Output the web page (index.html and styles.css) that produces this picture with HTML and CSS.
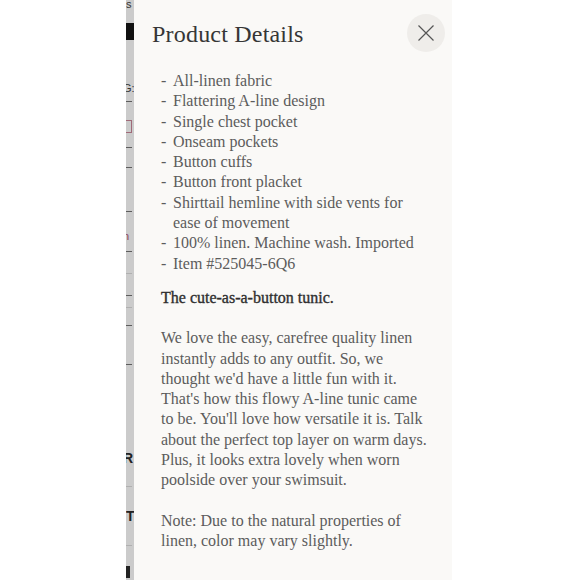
FILE: index.html
```html
<!DOCTYPE html>
<html lang="en">
<head>
<meta charset="utf-8">
<title>Product Details</title>
<link rel="stylesheet" href="styles.css">
</head>
<body>
<div class="page">
  <div class="left"></div>
  <div class="strip" aria-hidden="true">
    <span class="frag">s</span>
    <i class="blk"></i>
    <span class="frag cut">G:</span>
    <i class="ln"></i>
    <i class="sq"></i>
    <i class="ln"></i>
    <i class="ln"></i>
    <i class="ln"></i>
    <span class="frag cut red">n</span>
    <i class="ln"></i>
    <i class="ln faint"></i>
    <i class="ln"></i>
    <i class="ln faint"></i>
    <i class="ln"></i>
    <i class="ln"></i>
    <span class="frag cut big">R</span>
    <i class="ln faint"></i>
    <span class="frag big">T</span>
    <i class="ln faint"></i>
    <i class="blk small"></i>
  </div>
  <aside class="panel">
    <header class="head">
      <h1 class="title">Product Details</h1>
      <button class="close" type="button" aria-label="Close">
        <svg width="18" height="18" viewBox="0 0 18 18"><path d="M1.5 1.5 L16.5 16.5 M16.5 1.5 L1.5 16.5" stroke="#555" stroke-width="1.2" fill="none"/></svg>
      </button>
    </header>
    <div class="body">
      <ul class="feats">
        <li>All-linen fabric</li>
        <li>Flattering A-line design</li>
        <li>Single chest pocket</li>
        <li>Onseam pockets</li>
        <li>Button cuffs</li>
        <li>Button front placket</li>
        <li>Shirttail hemline with side vents for<br>ease of movement</li>
        <li>100% linen. Machine wash. Imported</li>
        <li>Item #525045-6Q6</li>
      </ul>
      <p class="lead">The cute-as-a-button tunic.</p>
      <p class="txt">We love the easy, carefree quality linen<br>instantly adds to any outfit. So, we<br>thought we'd have a little fun with it.<br>That's how this flowy A-line tunic came<br>to be. You'll love how versatile it is. Talk<br>about the perfect top layer on warm days.<br>Plus, it looks extra lovely when worn<br>poolside over your swimsuit.</p>
      <p class="txt">Note: Due to the natural properties of<br>linen, color may vary slightly.</p>
    </div>
  </aside>
  <div class="right"></div>
</div>
</body>
</html>
```

FILE: styles.css
```css
* { box-sizing: border-box; }
html, body { margin: 0; padding: 0; background: #ffffff; }
.page {
  display: flex;
  height: 580px;
  overflow: hidden;
}
.left { width: 126px; flex: none; background: #ffffff; }
.right { flex: 1; background: #ffffff; }

.strip {
  width: 8px;
  flex: none;
  background: #cbcbcb;
  overflow: hidden;
  display: flex;
  flex-direction: column;
  align-items: flex-start;
  font-family: "Liberation Sans", Arial, sans-serif;
}
.strip .frag {
  display: block;
  font-size: 11px;
  line-height: 12px;
  height: 12px;
  color: #333;
  white-space: nowrap;
}
.strip .frag.cut { margin-left: -3px; }
.strip .frag.red { color: #8a3d55; }
.strip .frag.big { font-size: 14px; line-height: 14px; height: 14px; font-weight: bold; color: #222; }
.strip .blk { display: block; width: 8px; height: 17px; background: #111; }
.strip .blk.small { width: 4px; height: 12px; background: #222; }
.strip .ln { display: block; width: 6px; height: 1px; background: #5d5d5d; }
.strip .ln.faint { background: #b0b0b0; }
.strip .sq { display: block; width: 6px; height: 13px; border: 1px solid #a06a78; border-left: none; }

.strip > :nth-child(1) { margin-top: -2px; }
.strip > :nth-child(2) { margin-top: 13px; }
.strip > :nth-child(3) { margin-top: 42px; }
.strip > :nth-child(4) { margin-top: 7px; }
.strip > :nth-child(5) { margin-top: 18px; }
.strip > :nth-child(6) { margin-top: 14px; }
.strip > :nth-child(7) { margin-top: 19px; }
.strip > :nth-child(8) { margin-top: 43px; }
.strip > :nth-child(9) { margin-top: 18px; }
.strip > :nth-child(10) { margin-top: 9px; }
.strip > :nth-child(11) { margin-top: 21px; }
.strip > :nth-child(12) { margin-top: 21px; }
.strip > :nth-child(13) { margin-top: 11px; }
.strip > :nth-child(14) { margin-top: 17px; }
.strip > :nth-child(15) { margin-top: 38px; }
.strip > :nth-child(16) { margin-top: 86px; }
.strip > :nth-child(17) { margin-top: 21px; }
.strip > :nth-child(18) { margin-top: 22px; }
.strip > :nth-child(19) { margin-top: 22px; }
.strip > :nth-child(20) { margin-top: 20px; }

.panel {
  width: 318px;
  flex: none;
  background: #faf9f7;
  font-family: "Liberation Serif", "Times New Roman", serif;
  color: #5c5c5c;
}
.head {
  display: flex;
  align-items: center;
  justify-content: space-between;
  padding: 14px 7px 0 18px;
}
.title {
  margin: 0;
  padding-top: 2px;
  font-size: 24px;
  font-weight: normal;
  color: #363636;
  letter-spacing: 0.2px;
}
.close {
  width: 38px;
  height: 38px;
  border: none;
  border-radius: 50%;
  background: #efedea;
  padding: 0;
  display: flex;
  align-items: center;
  justify-content: center;
}
.close svg { display: block; }

.body {
  padding: 19px 6px 0 27px;
  font-size: 16px;
  line-height: 20.3px;
}
.feats {
  list-style: none;
  margin: 0 0 14px;
  padding: 0;
}
.feats li {
  position: relative;
  padding-left: 12px;
  white-space: nowrap;
}
.feats li::before {
  content: "-";
  position: absolute;
  left: 0;
  top: 0;
}
.lead {
  margin: 0 0 20px;
  color: #2f2f2f;
  font-weight: normal;
  -webkit-text-stroke: 0.35px #2f2f2f;
}
.txt {
  margin: 0 0 20px;
  white-space: nowrap;
}
```
